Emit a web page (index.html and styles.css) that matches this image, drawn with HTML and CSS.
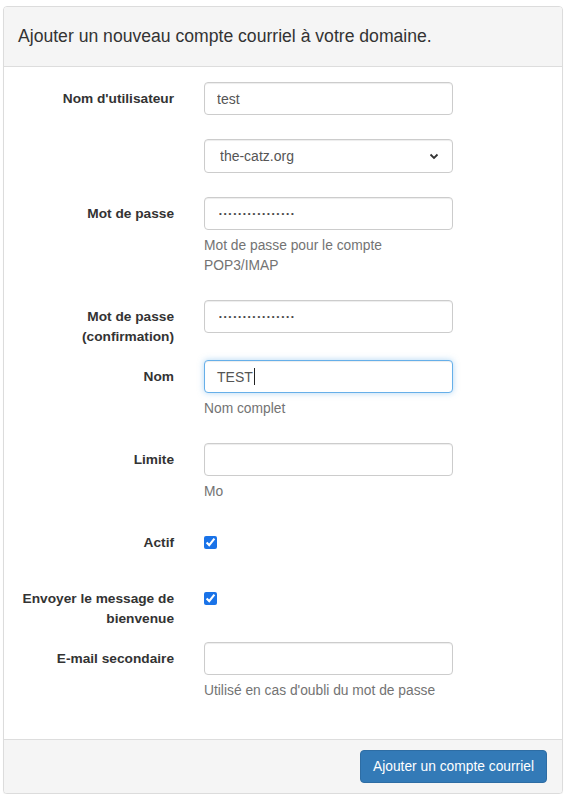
FILE: index.html
```html
<!DOCTYPE html>
<html lang="fr">
<head>
<meta charset="utf-8">
<title>Ajouter un compte courriel</title>
<link rel="stylesheet" href="styles.css">
</head>
<body>
<form class="panel">
  <div class="panel-heading">Ajouter un nouveau compte courriel à votre domaine.</div>
  <div class="panel-body">
    <div class="row">
      <label class="lbl" for="u">Nom d'utilisateur</label>
      <div class="ctl"><input id="u" class="field" type="text" value="test"></div>
    </div>
    <div class="row">
      <div class="lbl"></div>
      <div class="ctl">
        <div class="select-wrap">
          <select class="field select"><option>the-catz.org</option></select>
          <svg class="chev" width="10" height="7" viewBox="0 0 10 7"><path d="M1.5 1.5 L5 5 L8.5 1.5" fill="none" stroke="#333" stroke-width="1.8"/></svg>
        </div>
      </div>
    </div>
    <div class="row">
      <label class="lbl" for="p1">Mot de passe</label>
      <div class="ctl">
        <input id="p1" class="field pw" type="password" value="testtesttesttest">
        <p class="help">Mot de passe pour le compte POP3/IMAP</p>
      </div>
    </div>
    <div class="row">
      <label class="lbl" for="p2">Mot de passe (confirmation)</label>
      <div class="ctl"><input id="p2" class="field pw" type="password" value="testtesttesttest"></div>
    </div>
    <div class="row">
      <label class="lbl" for="n">Nom</label>
      <div class="ctl">
        <div class="field focus" id="n"><span>TEST</span><span class="caret"></span></div>
        <p class="help">Nom complet</p>
      </div>
    </div>
    <div class="row">
      <label class="lbl" for="l">Limite</label>
      <div class="ctl">
        <input id="l" class="field" type="text" value="">
        <p class="help">Mo</p>
      </div>
    </div>
    <div class="row">
      <label class="lbl" for="a">Actif</label>
      <div class="ctl"><div class="check"><input id="a" type="checkbox" checked></div></div>
    </div>
    <div class="row">
      <label class="lbl" for="w">Envoyer le message de bienvenue</label>
      <div class="ctl"><div class="check"><input id="w" type="checkbox" checked></div></div>
    </div>
    <div class="row">
      <label class="lbl" for="e">E-mail secondaire</label>
      <div class="ctl">
        <input id="e" class="field" type="text" value="">
        <p class="help">Utilisé en cas d'oubli du mot de passe</p>
      </div>
    </div>
  </div>
  <div class="panel-footer">
    <button type="button" class="btn">Ajouter un compte courriel</button>
  </div>
</form>
</body>
</html>
```
FILE: styles.css
```css
* { box-sizing: border-box; }
html, body { margin: 0; padding: 0; background: #fff; }
body {
  padding: 6px 0 0 3px;
  font-family: "Liberation Sans", Arial, sans-serif;
  font-size: 14px;
  color: #333;
}
.panel {
  width: 560px;
  border: 1px solid #dcdcdc;
  border-radius: 4px;
  box-shadow: 0 1px 1px rgba(0,0,0,.05);
  background: #fff;
  overflow: hidden;
}
.panel-heading {
  height: 60px;
  padding: 0 14px;
  display: flex;
  align-items: center;
  background: #f5f5f5;
  border-bottom: 1px solid #ddd;
  font-size: 17.6px;
  color: #333;
}
.panel-body {
  padding: 15px 0 14px 0;
}
.row {
  display: flex;
  align-items: flex-start;
  margin-bottom: 14px;
}
.lbl {
  width: 170px;
  flex: none;
  padding: 7px 0 0 15px;
  margin-bottom: -1px;
  text-align: right;
  font-weight: bold;
  font-size: 13.7px;
  line-height: 20px;
  color: #333;
}
.ctl {
  width: 249px;
  margin-left: 30px;
  flex: none;
  padding-bottom: 10px;
}
.field {
  display: block;
  width: 249px;
  height: 33px;
  margin: 0;
  padding: 0 12px;
  border: 1px solid #ccc;
  border-radius: 4px;
  box-shadow: inset 0 1px 1px rgba(0,0,0,.075);
  background: #fff;
  font-family: "Liberation Sans", Arial, sans-serif;
  font-size: 14px;
  color: #555;
  outline: none;
}
.pw { font-size: 8px; letter-spacing: 2px; color: #444; padding-left: 14px; }
.select-wrap { position: relative; }
.select {
  appearance: none;
  -webkit-appearance: none;
  padding-left: 15px;
  height: 34px;
}
.chev { position: absolute; right: 14px; top: 14px; }
.focus {
  display: flex;
  align-items: center;
  border-color: #66afe9;
  box-shadow: inset 0 1px 1px rgba(0,0,0,.075), 0 0 6px rgba(102,175,233,.5);
}
.caret {
  display: inline-block;
  width: 1px;
  height: 17px;
  margin-left: 1px;
  background: #222;
}
.help {
  margin: 6px 0 0 0;
  line-height: 20px;
  color: #737373;
  font-size: 13.8px;
}
.check {
  height: 32px;
  display: flex;
  align-items: flex-start;
  padding-top: 10px;
}
.check input {
  margin: 0;
  width: 13px;
  height: 13px;
  accent-color: #1a73e8;
}
.panel-footer {
  display: flex;
  justify-content: flex-end;
  padding: 10px 15px 10px 0;
  background: #f5f5f5;
  border-top: 1px solid #ddd;
}
.btn {
  height: 33px;
  padding: 0 12px;
  border: 1px solid #2e6da4;
  border-radius: 4px;
  background: #337ab7;
  color: #fff;
  font-family: "Liberation Sans", Arial, sans-serif;
  font-size: 13.8px;
  cursor: pointer;
}
```
